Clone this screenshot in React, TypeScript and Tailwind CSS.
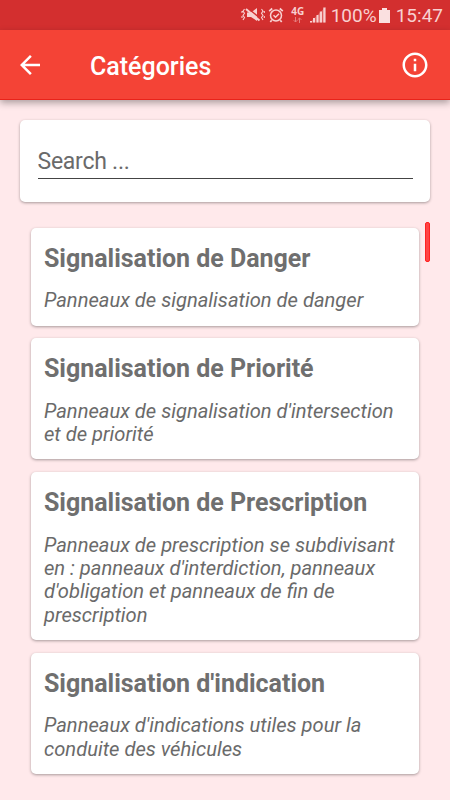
import React, { useState } from 'react';

interface Category {
  title: string;
  description: string;
}

const CATEGORIES: Category[] = [
  { title: 'Signalisation de Danger', description: 'Panneaux de signalisation de danger' },
  { title: 'Signalisation de Priorité', description: "Panneaux de signalisation d'intersection et de priorité" },
  {
    title: 'Signalisation de Prescription',
    description:
      "Panneaux de prescription se subdivisant en : panneaux d'interdiction, panneaux d'obligation et panneaux de fin de prescription",
  },
  { title: "Signalisation d'indication", description: "Panneaux d'indications utiles pour la conduite des véhicules" },
];

const StatusBar: React.FC = () => (
  <div className="h-[30px] shrink-0 bg-[#d32f2f] flex items-center justify-end pr-[7px] text-[#f8d0d0]">
    {/* vibrate / muted */}
    <svg className="w-6 h-[18px] mr-[3px]" viewBox="0 0 24 18" fill="none" stroke="currentColor">
      <path d="M6 6.500h4l6-4.500v13l-6-4H6z" fill="currentColor" stroke="none" />
      <path d="M6 1.500l14 11.500" stroke="#d32f2f" strokeWidth="1.500" />
      <path d="M5 3l13.500 11.500" strokeWidth="2" />
      <path d="M3.500 3l-1.500 2.200 1.500 2L2 9.500l1.500 2L2 14M1 5v2M1 10v2" strokeWidth="1.100" />
      <path d="M20.500 3l1.500 2.200-1.500 2L22 9.500l-1.500 2L22 14M23.300 5v2M23.300 10v2" strokeWidth="1.100" />
    </svg>
    {/* alarm */}
    <svg className="w-4 h-4 mr-[7px]" viewBox="0 0 16 16" fill="none" stroke="currentColor" strokeWidth="1.500">
      <circle cx="8" cy="8.500" r="5.500" />
      <path d="M5.500 8.300l2 2 3.500-3.500" />
      <path d="M1.200 4.200l3-2.700M14.800 4.200l-3-2.700M3.700 13.200l-1.400 1.800M12.300 13.200l1.400 1.800" strokeWidth="1.700" />
    </svg>
    <div className="w-[14px] mr-[5px] flex flex-col items-center">
      <span className="font-['Open_Sans',sans-serif] font-bold text-[10px] leading-[9px]">4G</span>
      <svg className="w-[9px] h-[6px] mt-px opacity-50" viewBox="0 0 9 6" fill="none" stroke="currentColor">
        <path d="M2.500 0v5M.7 3.200l1.800 1.800 1.800-1.800M6.500 6V1M4.700 2.800L6.500 1l1.800 1.800" />
      </svg>
    </div>
    <svg className="w-4 h-4 mr-[5px]" viewBox="0 0 16 16" fill="currentColor">
      <path d="M0 14h2v1.500H0zM3 11h2v4.500H3zM6.500 8h2v7.500h-2zM9.800 4.500h2.200v11H9.800zM13.300 0.500h2.200v15h-2.200z" />
      <path d="M0 15.500L15.500 0v15.500z" opacity=".3" />
    </svg>
    <span className="text-[19px] leading-[30px] w-[46px] whitespace-nowrap pt-px">100%</span>
    <svg className="w-[11px] h-[15px] mr-[6px] ml-[2px]" viewBox="0 0 11 15" fill="#fae0e0">
      <path d="M3 0h5v2h3v13H0V2h3z" />
    </svg>
    <span className="text-[19px] leading-[30px] pt-px">15:47</span>
  </div>
);

const AppBar: React.FC = () => (
  <header className="relative z-10 h-[70px] shrink-0 bg-[#f44336] border-b border-[#e8231a] shadow-[0_3px_7px_rgba(0,0,0,0.32)] flex items-center pl-[15px] pr-5 text-white">
    <button aria-label="Retour" className="w-[30px] h-[30px]">
      <svg className="w-[30px] h-[30px]" viewBox="0 0 24 24" fill="currentColor">
        <path d="M20 11H7.830l5.590-5.590L12 4l-8 8 8 8 1.410-1.410L7.830 13H20z" />
      </svg>
    </button>
    <h1 className="ml-[45px] mt-[4px] flex-1 text-[25px] leading-[30px] font-medium">Catégories</h1>
    <button aria-label="Informations" className="w-[30px] h-[30px]">
      <svg className="w-[30px] h-[30px]" viewBox="0 0 24 24" fill="currentColor">
        <path d="M11 17h2v-6h-2v6zm1-15C6.480 2 2 6.480 2 12s4.480 10 10 10 10-4.480 10-10S17.520 2 12 2zm0 18c-4.410 0-8-3.590-8-8s3.590-8 8-8 8 3.590 8 8-3.590 8-8 8zM11 9h2V7h-2v2z" />
      </svg>
    </button>
  </header>
);

const CategoryCard: React.FC<{ category: Category }> = ({ category }) => (
  <li className="bg-white rounded-[5px] shadow-[0_1px_3px_rgba(0,0,0,0.35)] pt-[16px] pb-[13px] pl-[13px] pr-3">
    <h2 className="text-[25px] leading-[29px] tracking-[-0.02px] font-bold text-[#6f6f6f]">{category.title}</h2>
    <p className="mt-[16.5px] text-[20.15px] leading-[23.4px] italic text-[#6a6a6a]">{category.description}</p>
  </li>
);

const App: React.FC = () => {
  const [query, setQuery] = useState('');

  const visible = CATEGORIES.filter((c) => c.title.toLowerCase().includes(query.toLowerCase()));

  return (
    <div className="w-full h-[800px] bg-[#ffe9eb] flex flex-col overflow-hidden font-[Roboto,sans-serif]">
      <StatusBar />
      <AppBar />

      <div className="mt-5 mx-5 h-[82px] shrink-0 bg-white rounded-[5px] shadow-[0_1px_3px_rgba(0,0,0,0.35)] px-[17.5px] pt-[25px]">
        <input
          value={query}
          onChange={(e) => setQuery(e.target.value)}
          placeholder="Search ..."
          className="block w-full h-[34px] pt-[2px] border-b border-[#444] text-[23px] tracking-[-0.25px] text-[#555] placeholder:text-[#6a6a6a] outline-none"
        />
      </div>

      <div className="mt-5 ml-[31px] mr-5 flex justify-between">
        <ul className="mt-[5.6px] w-[388px] flex flex-col gap-[12.6px]">
          {visible.map((c) => (
            <CategoryCard key={c.title} category={c} />
          ))}
        </ul>
        <div className="w-[5px] h-10 rounded-[2px] bg-[#ff4444] border border-[#ff2222]" />
      </div>
    </div>
  );
};

export default App;
